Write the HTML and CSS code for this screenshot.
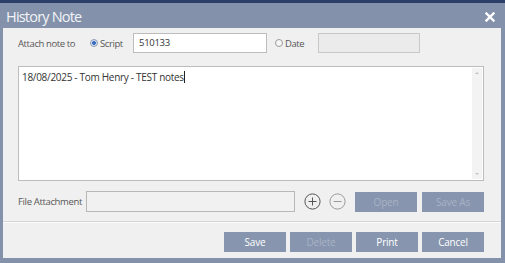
FILE: index.html
```html
<!DOCTYPE html>
<html>
<head>
<meta charset="utf-8">
<link rel="stylesheet" href="styles.css">
</head>
<body>
<div class="window">
  <div class="topstrip"></div>
  <div class="titlebar">
    <span class="title">History Note</span>
    <svg class="close" width="10" height="10" viewBox="0 0 10 10"><path d="M1.5 1.5 L8.5 8.5 M8.5 1.5 L1.5 8.5" stroke="#fff" stroke-width="2.4" stroke-linecap="square"/></svg>
  </div>
  <div class="panel">
    <div class="row attach">
      <span class="label">Attach note to</span>
      <span class="radio checked"></span><span class="rlabel">Script</span>
      <div class="input script">510133</div>
      <span class="radio"></span><span class="rlabel">Date</span>
      <div class="input date"></div>
    </div>
    <div class="notes">
      <div class="notetext">18/08/2025 - Tom Henry - TEST notes<span class="caret"></span></div>
      <div class="scroll">
        <span class="arrow up"></span>
        <span class="arrow down"></span>
      </div>
    </div>
    <div class="row file">
      <span class="label">File Attachment</span>
      <div class="input fileinput"></div>
      <svg class="circ plus" width="17" height="17" viewBox="0 0 17 17"><circle cx="8.5" cy="8.5" r="7.6" fill="none" stroke="#555" stroke-width="1"/><path d="M4.5 8.5 H12.5 M8.5 4.5 V12.5" stroke="#555" stroke-width="1"/></svg>
      <svg class="circ minus" width="17" height="17" viewBox="0 0 17 17"><circle cx="8.5" cy="8.5" r="7.6" fill="none" stroke="#9a9a9a" stroke-width="1"/><path d="M4.5 8.5 H12.5" stroke="#9a9a9a" stroke-width="1"/></svg>
      <div class="btn disabled open">Open</div>
      <div class="btn disabled">Save As</div>
    </div>
    <div class="sep"></div>
    <div class="row actions">
      <div class="btn">Save</div>
      <div class="btn disabled">Delete</div>
      <div class="btn">Print</div>
      <div class="btn">Cancel</div>
    </div>
  </div>
</div>
</body>
</html>
```
FILE: styles.css
```css
html, body {
  margin: 0;
  padding: 0;
  width: 505px;
  height: 263px;
  overflow: hidden;
  background: #8391aa;
  font-family: "Open Sans", "Noto Sans", sans-serif;
}
.window {
  display: flex;
  flex-direction: column;
  height: 263px;
}
.topstrip {
  height: 3px;
  background: #2c3f68;
}
.titlebar {
  height: 25px;
  display: flex;
  align-items: center;
  justify-content: space-between;
  padding: 0 10px 0 6px;
  background: #8391aa;
}
.title {
  color: #f2f4f8;
  font-size: 14.5px;
  letter-spacing: -0.8px;
  margin-top: 1px;
}
.close {
  margin-top: 2px;
}
.panel {
  margin: 0 4px 0 3px;
  height: 230px;
  background: #f0f0f0;
  display: flex;
  flex-direction: column;
}
.row {
  display: flex;
  align-items: center;
  white-space: nowrap;
}
.label, .rlabel {
  font-size: 9.5px;
  letter-spacing: -0.4px;
  color: #585858;
}
.attach {
  margin-top: 5px;
  height: 20px;
  padding-left: 15px;
}
.attach .label {
  width: 72px;
}
.radio {
  width: 6px;
  height: 6px;
  border: 1px solid #9a9a9a;
  border-radius: 50%;
  background: #f7f7f7;
  margin-right: 2px;
}
.radio.checked {
  background: radial-gradient(circle, #3b6fc4 0 1.6px, #d6e1f2 2.2px);
  border-color: #8e9bb2;
}
.rlabel {
  width: 33px;
}
.input {
  height: 18px;
  border: 1px solid #bdbdbd;
  background: #fff;
  box-sizing: content-box;
  font-size: 9.5px;
  letter-spacing: -0.3px;
  color: #333;
  line-height: 18px;
  padding-left: 5px;
}
.input.script {
  width: 127px;
  margin-right: 8px;
}
.input.date {
  width: 95px;
  background: #ebebeb;
  border-color: #c8c8c8;
}
.notes {
  margin: 13px 0 0 15px;
  width: 464px;
  height: 113px;
  border: 1px solid #bcbcbc;
  background: #fff;
  display: flex;
  justify-content: space-between;
}
.notetext {
  font-size: 10px;
  letter-spacing: -0.3px;
  color: #333;
  padding: 3px 0 0 3px;
}
.caret {
  display: inline-block;
  width: 1px;
  height: 12px;
  background: #222;
  vertical-align: -2px;
}
.scroll {
  width: 10px;
  margin: 1px 1px 1px 0;
  background: #f3f3f3;
  display: flex;
  flex-direction: column;
  justify-content: space-between;
  align-items: center;
  padding: 4px 0;
}
.arrow {
  width: 0;
  height: 0;
  border-left: 2px solid transparent;
  border-right: 2px solid transparent;
}
.arrow.up { border-bottom: 2px solid #c4c4c4; }
.arrow.down { border-top: 2px solid #c4c4c4; }
.file {
  margin-top: 10px;
  height: 21px;
  padding-left: 15px;
}
.file .label {
  width: 68px;
  letter-spacing: -0.35px;
}
.input.fileinput {
  width: 202px;
  height: 19px;
  background: #f1f1f1;
  border-color: #b8b8b8;
}
.circ.plus {
  margin-left: 9px;
}
.circ.minus {
  margin-left: 8px;
}
.btn {
  width: 62px;
  height: 20px;
  background: #8795ae;
  color: #fff;
  font-size: 10px;
  letter-spacing: -0.2px;
  display: flex;
  align-items: center;
  justify-content: center;
  margin-left: 4px;
}
.btn.disabled {
  color: #a8b2c5;
}
.file .btn {
  margin-left: 5px;
}
.file .btn.open {
  margin-left: 9px;
}
.sep {
  margin-top: 9px;
  height: 1px;
  background: #d6d6d6;
  border-bottom: 1px solid #fafafa;
}
.actions {
  margin-top: 9px;
  justify-content: flex-end;
  padding-right: 17px;
}
```
